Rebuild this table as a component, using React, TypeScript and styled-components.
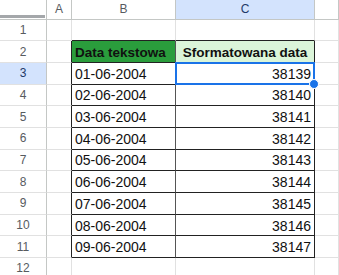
import React from 'react';
import styled, { createGlobalStyle } from 'styled-components';

const GlobalStyle = createGlobalStyle`
    html, body {
        margin: 0;
        padding: 0;
        background: #ffffff;
    }
    body {
        font-family: 'Liberation Sans', Arial, sans-serif;
    }
`;

const COLS = ['A', 'B', 'C', 'D'];
const ROWS = Array.from({ length: 12 }, (_, i) => i + 1);
const GRID = '#e1e1e1';
const EDGE = '#222222';

const dates = ['01', '02', '03', '04', '05', '06', '07', '08', '09'].map((d) => `${d}-06-2004`);

const inTable = (row: number) => row >= 2 && row <= 11;

const cellContent = (row: number, col: string): string => {
    if (row === 2 && col === 'B') return 'Data tekstowa';
    if (row === 2 && col === 'C') return 'Sformatowana data';
    if (row >= 3 && row <= 11 && col === 'B') return dates[row - 3];
    if (row >= 3 && row <= 11 && col === 'C') return String(38139 + row - 3);
    return '';
};

const App: React.FC = () => {
    return (
        <>
            <GlobalStyle />
            <Sheet>
                <Corner>
                    <FreezeBar />
                </Corner>
                {COLS.map((c) => (
                    <ColHeader key={c} $selected={c === 'C'}>
                        {c === 'D' ? '' : c}
                    </ColHeader>
                ))}
                {ROWS.map((r) => (
                    <React.Fragment key={r}>
                        <RowHeader $selected={r === 3}>{r}</RowHeader>
                        {COLS.map((c) => {
                            const tableCol = c === 'B' || c === 'C';
                            let right = GRID;
                            let bottom = GRID;
                            if (c === 'A' && inTable(r)) right = EDGE;
                            if (tableCol && inTable(r)) {
                                right = c === 'B' ? '#555555' : EDGE;
                                bottom = EDGE;
                            }
                            if (tableCol && r === 1) bottom = EDGE;
                            let bg = '#ffffff';
                            if (r === 2 && c === 'B') bg = '#2a9d3c';
                            if (r === 2 && c === 'C') bg = '#dbf5d9';
                            const selected = r === 3 && c === 'C';
                            let align: 'left' | 'center' | 'right' = 'left';
                            if (c === 'C') align = r === 2 ? 'center' : 'right';
                            return (
                                <Cell
                                    key={c}
                                    $right={right}
                                    $bottom={bottom}
                                    $bg={bg}
                                    $bold={r === 2}
                                    $align={align}
                                    $selected={selected}
                                >
                                    {cellContent(r, c)}
                                    {selected && (
                                        <>
                                            <Selection />
                                            <FillHandle />
                                        </>
                                    )}
                                </Cell>
                            );
                        })}
                    </React.Fragment>
                ))}
            </Sheet>
        </>
    );
};

export default App;

const Sheet = styled.div`
    display: grid;
    grid-template-columns: 47px 25px 104px 139px 1fr;
    grid-template-rows: 19.5px repeat(12, 21.7px);
    width: 339px;
    height: 275px;
    overflow: hidden;
    background: #ffffff;
`;

const Corner = styled.div`
    position: relative;
    box-sizing: border-box;
    border-right: 1px solid #c4c7c5;
    border-bottom: 1px solid #c4c7c5;
    background: #ffffff;
`;

const FreezeBar = styled.div`
    position: absolute;
    left: 0;
    right: 1px;
    bottom: 1px;
    height: 3px;
    background: #a4a7aa;
`;

const ColHeader = styled.div<{ $selected?: boolean }>`
    display: flex;
    align-items: center;
    justify-content: center;
    box-sizing: border-box;
    border-right: 1px solid #c4c7c5;
    border-bottom: 1px solid #c4c7c5;
    background: ${(p) => (p.$selected ? '#d3e3fd' : '#ffffff')};
    color: ${(p) => (p.$selected ? '#1f3a68' : '#575b5f')};
    font-size: 12px;
`;

const RowHeader = styled.div<{ $selected?: boolean }>`
    display: flex;
    align-items: center;
    justify-content: center;
    box-sizing: border-box;
    border-right: 1px solid #c4c7c5;
    border-bottom: 1px solid ${GRID};
    background: ${(p) => (p.$selected ? '#d3e3fd' : '#ffffff')};
    color: ${(p) => (p.$selected ? '#1f3a68' : '#575b5f')};
    font-size: 12px;
`;

const justify = { left: 'flex-start', center: 'center', right: 'flex-end' };

const Cell = styled.div<{
    $right: string;
    $bottom: string;
    $bg: string;
    $bold?: boolean;
    $align: 'left' | 'center' | 'right';
    $selected?: boolean;
}>`
    position: relative;
    z-index: ${(p) => (p.$selected ? 2 : 'auto')};
    display: flex;
    align-items: center;
    justify-content: ${(p) => justify[p.$align]};
    box-sizing: border-box;
    padding: 1px 3px 0 3px;
    border-right: 1px solid ${(p) => p.$right};
    border-bottom: 1px solid ${(p) => p.$bottom};
    background: ${(p) => p.$bg};
    color: #111111;
    font-size: ${(p) => (p.$bold ? '13.5px' : '14px')};
    font-weight: ${(p) => (p.$bold ? 700 : 400)};
    white-space: nowrap;
`;

const Selection = styled.div`
    position: absolute;
    left: -1px;
    top: -1px;
    right: -1px;
    bottom: -1px;
    border: 2px solid #1a73e8;
    pointer-events: none;
`;

const FillHandle = styled.div`
    position: absolute;
    right: -5px;
    bottom: -5px;
    width: 8px;
    height: 8px;
    border-radius: 50%;
    background: #1a73e8;
    border: 1px solid #ffffff;
`;
